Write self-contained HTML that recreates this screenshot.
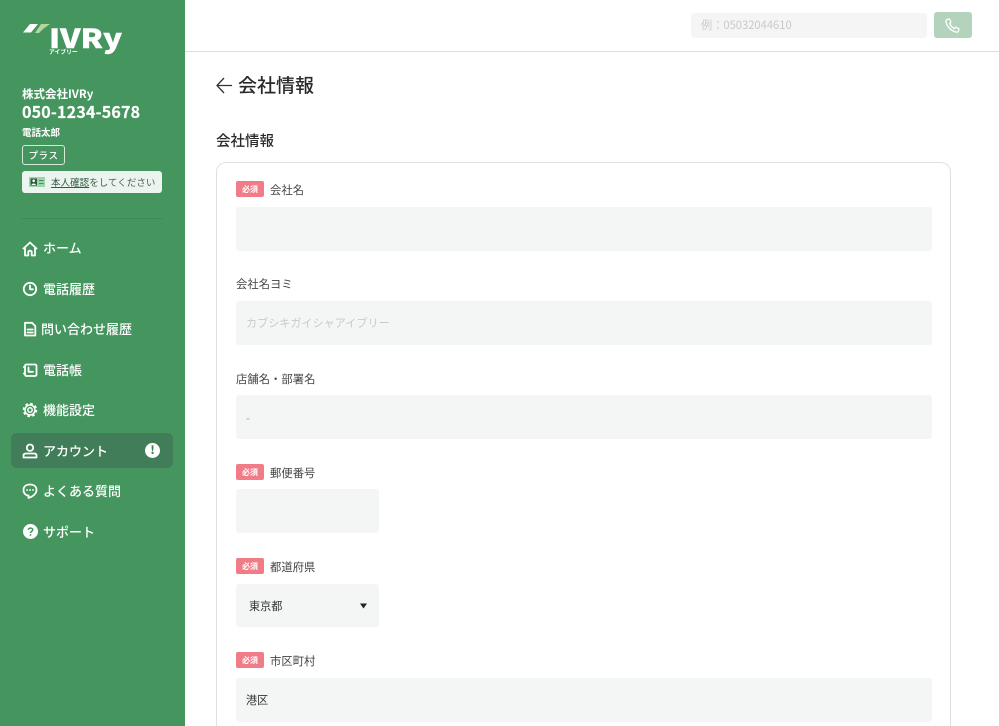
<!DOCTYPE html>
<html lang="ja"><head><meta charset="utf-8"><title>会社情報</title>
<style>
html,body{margin:0;padding:0;background:#fff;width:999px;height:726px;overflow:hidden}
body{font-family:"Noto Sans CJK JP","Liberation Sans",sans-serif;color:#333}
#root{position:absolute;left:0;top:0;width:999px;height:726px;overflow:hidden}
.a{position:absolute;white-space:nowrap;line-height:1}
.side{position:absolute;left:0;top:0;width:185px;height:726px;background:#45955e}
.w{color:#fff}
.nav{position:absolute;font-size:13px;font-weight:500;color:#fff;letter-spacing:0;line-height:20px;white-space:nowrap}
.ic{position:absolute;left:22px;width:16px;height:16px}
.ic *{fill:none;stroke:#fff;stroke-width:1.8;stroke-linecap:round;stroke-linejoin:round}
.f{position:absolute;left:236px;width:696px;height:44px;background:#f4f5f5;border-radius:3px;font-size:11.100px;line-height:45px;text-indent:10px}
.lb{position:absolute;font-size:11.300px;color:#444;line-height:16px;white-space:nowrap;letter-spacing:.05px}
.req{position:absolute;left:236px;width:28px;height:16px;background:#f07c88;border-radius:2px;color:#fff;font-size:8px;font-weight:700;line-height:17px;text-align:center}
</style></head><body><div id="root">
<div class="side"></div>
<svg class="a" style="left:20px;top:20px" width="32" height="15" viewBox="0 0 32 15"><path d="M3 12.500 10 4H18L11 12.500Z" fill="#fff"/><path d="M15 13 21 4H30L23 9 19 13Z" fill="#b6d79c"/></svg>
<div class="a w" style="left:49px;top:19px;font-size:26px;font-weight:900;line-height:38px;transform:scaleX(1.22);transform-origin:0 0;-webkit-text-stroke:.4px #fff">IVRy</div>
<div class="a w" style="left:49px;top:49px;font-size:5.800px;font-weight:700;line-height:6px">アイブリー</div>
<div class="a w" style="left:22px;top:86px;font-size:11.500px;font-weight:700;line-height:16px">株式会社IVRy</div>
<div class="a w" style="left:22px;top:99px;font-size:16px;font-weight:700;line-height:24px;letter-spacing:.2px;-webkit-text-stroke:.2px #fff">050-1234-5678</div>
<div class="a w" style="left:22px;top:125px;font-size:9.500px;font-weight:700;line-height:14px">電話太郎</div>
<div class="a w" style="left:22px;top:145px;width:41px;height:18px;border:1px solid #d5e8da;border-radius:3px;font-size:9.500px;font-weight:500;line-height:19px;text-align:center;letter-spacing:.6px">プラス</div>
<div class="a" style="left:22px;top:171px;width:140px;height:22px;background:#ecf4ef;border-radius:3px"></div>
<svg class="a" style="left:29px;top:177px" width="16" height="10" viewBox="0 0 16 10"><rect width="16" height="10" fill="#9fd3a8"/><rect x="1.500" y="1.500" width="6.500" height="7" fill="#2f5d40"/><circle cx="4.700" cy="3.800" r="1.300" fill="#fff"/><path d="M2.500 8c.3-2 4-2 4.400 0z" fill="#fff"/><path d="M10 3.500h4.500M10 6.500h4.500" stroke="#4d8a60" stroke-width="1"/></svg>
<div class="a" style="left:51px;top:175px;font-size:9.500px;line-height:14px;color:#48614f;letter-spacing:.05px"><span style="text-decoration:underline;color:#2f5d40">本人確認</span>をしてください</div>
<div class="a" style="left:22px;top:218px;width:140px;height:1px;background:#3c8a55"></div>

<svg class="ic" style="top:241px" viewBox="0 0 16 16"><path d="M1.500 7.500 8 1.500l6.500 6M3 6.500V14.500H6.300V10.500Q8 8.800 9.700 10.500V14.500H13V6.500"/></svg>
<div class="nav" style="left:43px;top:238px">ホーム</div>
<svg class="ic" style="top:281px" viewBox="0 0 16 16"><circle cx="8" cy="8" r="6.200"/><path d="M8 4.500V8.300H11"/></svg>
<div class="nav" style="left:43px;top:279px">電話履歴</div>
<svg class="ic" style="top:321px" viewBox="0 0 16 16"><path d="M3 1.800H10L13.300 5V14.500H3ZM5.500 8.500H10.800M5.500 11.500H10.800"/></svg>
<div class="nav" style="left:41px;top:319px">問い合わせ履歴</div>
<svg class="ic" style="top:362px" viewBox="0 0 16 16"><rect x="3" y="2.500" width="11.500" height="11.500" rx="1.500"/><path d="M1.800 5H3M1.800 11.500H3M6.500 5.500V9.800H11"/></svg>
<div class="nav" style="left:43px;top:360px">電話帳</div>
<svg class="ic" style="top:402px" viewBox="0 0 16 16"><circle cx="8" cy="8" r="2.200" style="stroke-width:1.500"/><circle cx="8" cy="8" r="5" style="stroke-width:1.500"/><circle cx="8" cy="8" r="6.400" style="stroke-width:1.800;stroke-linecap:butt;stroke-dasharray:2.600 2.430"/></svg>
<div class="nav" style="left:43px;top:400px">機能設定</div>
<div class="a" style="left:11px;top:433px;width:162px;height:35px;background:#407d58;border-radius:6px"></div>
<svg class="ic" style="top:443px" viewBox="0 0 16 16"><circle cx="8" cy="4.700" r="3.200"/><path d="M1.500 14.500V12.500Q1.500 10.500 4 10.500H12Q14.500 10.500 14.500 12.500V14.500Z"/></svg>
<div class="nav" style="left:43px;top:441px">アカウント</div>
<div class="a" style="left:145px;top:443px;width:15px;height:15px;border-radius:50%;background:#fff;color:#407d58;font-size:11px;font-weight:900;line-height:15px;text-align:center">!</div>
<svg class="ic" style="top:483px" viewBox="0 0 16 16"><path d="M8 1.500C3.800 1.500 1.500 3.800 1.500 7s2.300 5.500 5 5.500V15C10 14 14.500 11 14.500 7c0-3.200-2.300-5.500-6.500-5.500Z"/><path d="M5 7h.1M8 7h.1M11 7h.1"/></svg>
<div class="nav" style="left:43px;top:481px">よくある質問</div>
<svg class="a" style="left:23px;top:524px" width="15" height="15" viewBox="0 0 15 15"><circle cx="7.500" cy="7.500" r="7.500" fill="#fff"/><path d="M5.300 5.800C5.500 3.500 9.800 3.500 9.800 5.800 9.800 7.300 7.500 7.300 7.500 9" fill="none" stroke="#45955e" stroke-width="1.500"/><circle cx="7.500" cy="11" r=".9" fill="#45955e"/></svg>
<div class="nav" style="left:43px;top:522px">サポート</div>

<div class="a" style="left:185px;top:51px;width:814px;height:1px;background:#dcdddd"></div>
<div class="a" style="left:691px;top:13px;width:236px;height:25px;background:#f5f5f5;border-radius:3px;font-size:11.200px;line-height:25px;text-indent:10px;color:#c9caca">例：05032044610</div>
<div class="a" style="left:934px;top:12px;width:38px;height:26px;background:#b4d3bd;border-radius:3px"></div>
<svg class="a" style="left:945px;top:18px" width="15" height="15" viewBox="0 0 15 15"><path d="M2 1.500 4.500 1 6 4.300 4.700 5.500C5.500 7.500 7.500 9.700 9.500 10.500L10.800 9.200 14 10.800 13.500 13C13.200 14 12 14.300 10.800 14 6 12.800 2 8.500 1 4 .8 3 1.200 2 2 1.500Z" fill="none" stroke="#fff" stroke-width="1.300" stroke-linejoin="round"/></svg>

<svg class="a" style="left:215px;top:76px" width="18" height="18" viewBox="0 0 18 18"><path d="M9 2 2 9.500 9 17M2 9.500H17" fill="none" stroke="#333" stroke-width="1.300"/></svg>
<div class="a" style="left:238px;top:71px;font-size:19px;font-weight:500;line-height:28px;color:#2b2b2b">会社情報</div>
<div class="a" style="left:216px;top:130px;font-size:14.500px;font-weight:500;line-height:22px;color:#2b2b2b">会社情報</div>
<div class="a" style="left:216px;top:162px;width:733px;height:563px;border:1px solid #dfe0e0;border-bottom:0;border-radius:10px 10px 0 0"></div>

<div class="req" style="top:181px">必須</div><div class="lb" style="left:270px;top:182px">会社名</div>
<div class="f" style="top:207px"></div>
<div class="lb" style="left:236px;top:276px">会社名ヨミ</div>
<div class="f" style="top:301px;color:#c9caca">カブシキガイシャアイブリー</div>
<div class="lb" style="left:236px;top:371px">店舗名・部署名</div>
<div class="f" style="top:395px;color:#999;line-height:46px">-</div>
<div class="req" style="top:464px">必須</div><div class="lb" style="left:270px;top:465px">郵便番号</div>
<div class="f" style="top:489px;width:143px"></div>
<div class="req" style="top:558px">必須</div><div class="lb" style="left:270px;top:559px">都道府県</div>
<div class="f" style="top:584px;width:143px;height:43px;text-indent:13px;color:#333">東京都</div>
<svg class="a" style="left:360px;top:603px" width="7" height="6" viewBox="0 0 7 6"><path d="M0 .5H7L3.500 5.500Z" fill="#222"/></svg>
<div class="req" style="top:652px">必須</div><div class="lb" style="left:270px;top:653px">市区町村</div>
<div class="f" style="top:678px;color:#333">港区</div>
</div></body></html>
